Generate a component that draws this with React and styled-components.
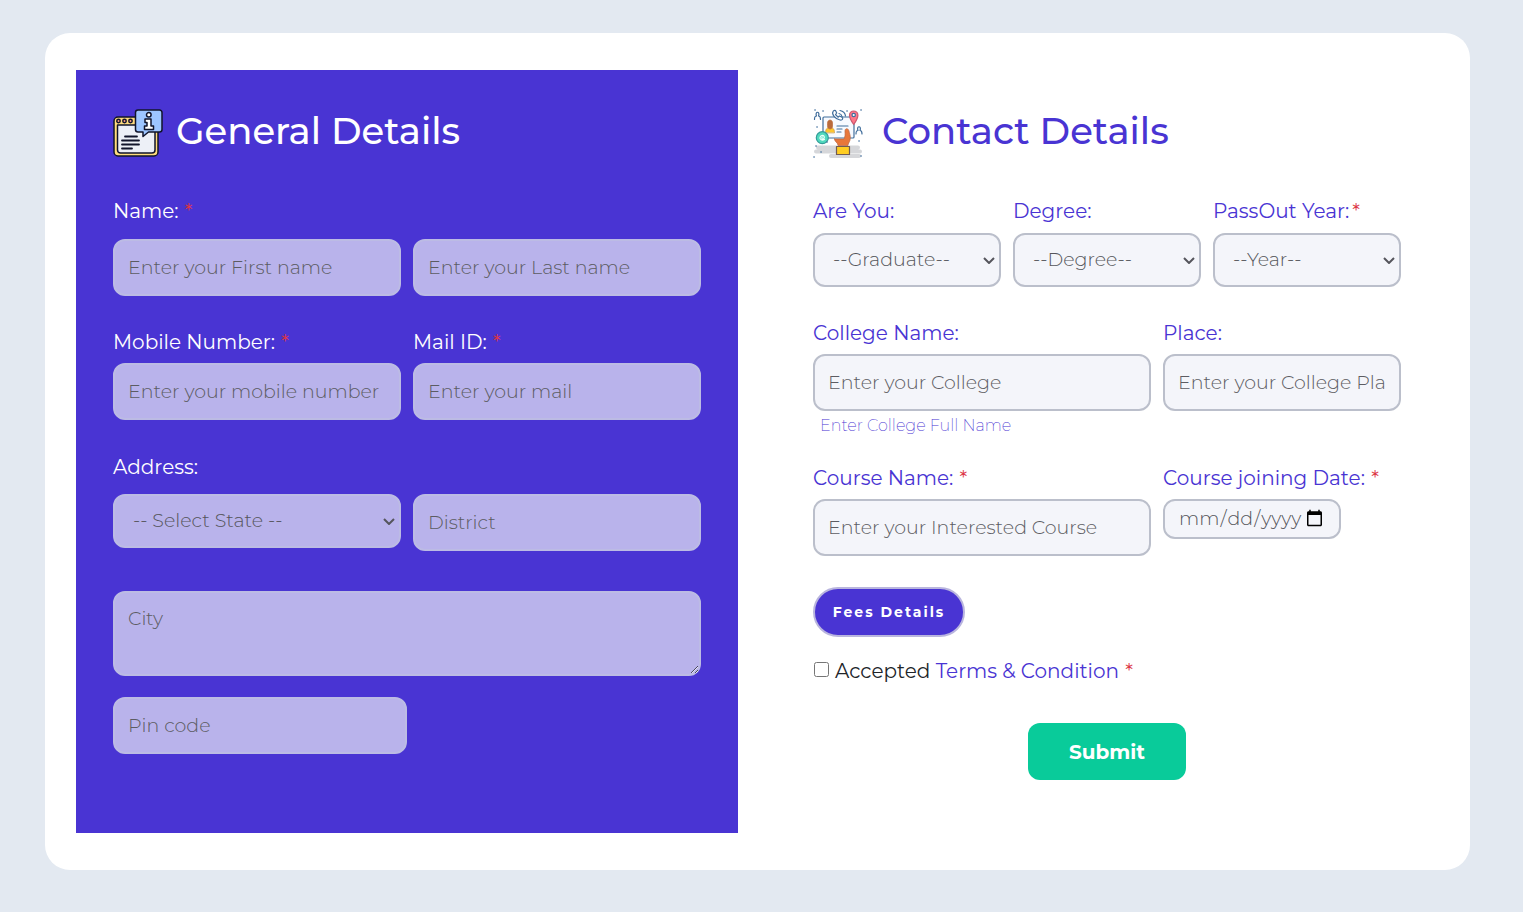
import React from "react";
import styled, { createGlobalStyle, css } from "styled-components";

const violet = "#4934d3";
const font = `Montserrat, Inter, "Liberation Sans", sans-serif`;

const GlobalStyle = createGlobalStyle`
  *, *::before, *::after { box-sizing: border-box; }
  body { margin: 0; background: #e3e9f1; font-family: ${font}; color: #212529; }
`;

const Page = styled.main`
  display: flow-root;
`;

const Card = styled.form`
  display: flex;
  gap: 38px;
  margin: 33px 53px 42px 45px;
  padding: 37px 32px 37px 31px;
  background: #fff;
  border-radius: 25px;
`;

const Panel = styled.section`
  flex: 1 1 0;
  min-width: 0;
  padding: 37px 37px 53px;
  color: ${(p) => (p.$filled ? "#fff" : violet)};
  background: ${(p) => (p.$filled ? violet : "#fff")};
`;

const Heading = styled.header`
  display: flex;
  align-items: flex-start;
  gap: ${(p) => p.$gap}px;
  height: 52px;
  margin-bottom: 40px;
`;

const Title = styled.h1`
  margin: 0;
  font-size: 37px;
  line-height: 48px;
  font-weight: 500;
  white-space: nowrap;
`;

const Icon = styled.svg`
  width: 50px;
  height: 50px;
  flex: none;
  align-self: flex-end;
`;

const Row = styled.div`
  display: grid;
  grid-template-columns: ${(p) => p.$cols};
  column-gap: ${(p) => p.$colGap ?? 12}px;
  align-items: start;
  margin-bottom: ${(p) => p.$after ?? 34}px;
`;

const Field = styled.div`
  display: flex;
  flex-direction: column;
  align-items: stretch;
  gap: ${(p) => p.$gap || 9}px;
  min-width: 0;
`;

const Label = styled.label`
  font-size: 20px;
  line-height: 24px;
  white-space: nowrap;
`;

const Legend = styled(Label).attrs({ as: "div" })`
  margin-bottom: ${(p) => p.$gap}px;
`;

const Star = styled.span`
  margin-left: ${(p) => (p.$tight ? 3 : 1)}px;
  color: #dc3545;
`;

const control = css`
  width: 100%;
  margin: 0;
  border: 2px solid ${(p) => (p.$tinted ? "#bcbbe4" : "#bbbfcb")};
  border-radius: 12px;
  background: ${(p) => (p.$tinted ? "#b9b3eb" : "#f4f5fa")};
  color: #55555b;
  font-family: ${font};
  font-size: 19px;
  font-weight: 300;
  &::placeholder { color: #5c5c62; opacity: 1; }
`;

const Input = styled.input`
  ${control}
  height: 57px;
  padding: 0 13px;
`;

const DateInput = styled(Input)`
  width: 178px;
  height: 40px;
  padding-bottom: 2px;
`;

const SelectBox = styled.div`
  position: relative;
  svg {
    position: absolute;
    right: 6px;
    top: 50%;
    width: 12px;
    height: 7px;
    margin-top: -3px;
    pointer-events: none;
  }
`;

const SelectControl = styled.select`
  ${control}
  display: block;
  appearance: none;
  height: 54px;
  padding: 0 24px 2px 18px;
`;

const TextArea = styled.textarea`
  ${control}
  display: block;
  height: 85px;
  padding: 14px 13px;
  line-height: 24px;
  resize: vertical;
`;

const Hint = styled.small`
  margin: -3px 0 0 7px;
  font-size: 16px;
  line-height: 18px;
  font-weight: 200;
`;

const FeesButton = styled.button`
  display: block;
  width: 152px;
  height: 50px;
  padding: 0;
  border: 2px solid #b9b5de;
  border-radius: 25px;
  background: ${violet};
  color: #fff;
  font-family: ${font};
  font-size: 14px;
  font-weight: 700;
  letter-spacing: 2px;
`;

const Terms = styled.div`
  display: flex;
  align-items: center;
  gap: 6px;
  margin: 22px 0 40px;
  color: #212529;
  a { color: ${violet}; text-decoration: none; }
`;

const Check = styled.input`
  width: 15px;
  height: 15px;
  margin: 0 0 3px 1px;
`;

const Submit = styled.button`
  display: block;
  width: 158px;
  height: 57px;
  margin: 0 auto;
  border: 0;
  border-radius: 12px;
  background: #09cb9a;
  color: #fff;
  font-family: ${font};
  font-size: 20px;
  font-weight: 700;
`;

function Select({ children, ...rest }) {
  return (
    <SelectBox>
      <SelectControl {...rest}>
        <option>{children}</option>
      </SelectControl>
      <svg viewBox="0 0 12 7" aria-hidden="true" fill="none" stroke="#55555c" strokeWidth="2">
        <path d="M1 1L6 6L11 1" />
      </svg>
    </SelectBox>
  );
}

function InfoIcon() {
  return (
    <Icon viewBox="0 0 50 50" aria-hidden="true" fill="none" stroke="#11142b" strokeWidth="1.5" strokeLinecap="round" strokeLinejoin="round">
      <rect x="1" y="8" width="44" height="39" rx="4" fill="#ffdc7c" />
      <path d="M4.5 16H42V41a3 3 0 0 1-3 3H7.500a3 3 0 0 1-3-3Z" fill="#edf0f7" />
      <g fill="#ff9b83">
        <circle cx="5.500" cy="12" r="1.700" />
        <circle cx="11.500" cy="12" r="1.700" />
        <circle cx="17.500" cy="12" r="1.700" />
      </g>
      <path d="M12 27.500H24M9 31.500H26M9 35.500H26M9 39.500H19" strokeWidth="1.800" />
      <path d="M25 1H46.500a2.500 2.500 0 0 1 2.500 2.500V20.500a2.500 2.500 0 0 1-2.500 2.500H35.500L30 27.500V23H25a2.500 2.500 0 0 1-2.500-2.500V3.500A2.500 2.500 0 0 1 25 1Z" fill="#9dc5ff" />
      <circle cx="35.800" cy="5.800" r="2.300" fill="#fff" />
      <path d="M32 10H38V17H40.500V20.500H31.500V17H34V13.500H32Z" fill="#fff" />
    </Icon>
  );
}

function ContactIcon() {
  return (
    <Icon viewBox="0 0 50 50" aria-hidden="true" fill="none" stroke="#416e9c" strokeWidth="1.200" strokeLinecap="round" strokeLinejoin="round">
      <path d="M5 38.500H45M3 42.500H47M18 47H46" stroke="#d6d7da" strokeWidth="4" />
      <rect x="10" y="8" width="31" height="21" rx="1" fill="#f7faff" />
      <path d="M20 2.500C18.500 5 22 10 27 11c2.500.5 3.500-1.500 2-2.700l-2.500-1.300-1.500 1.200-2.500-2.700 1.200-1.500L22.500 1.500C21.500 1 20.500 1.500 20 2.500Z" fill="#fff" />
      <path d="M26 4.500q2.500.5 3 3M27 1.500q5 1 5.500 5.500" />
      <path d="M12.500 23.500c0-3.500 1.500-5 4.500-5s4.500 1.500 4.500 5Z" fill="#ffc72e" stroke="#ca923e" strokeWidth=".7" />
      <path d="M14.500 14c0-4 5-4 5 0v3c0 4-5 4-5 0Z" fill="#b96b3c" stroke="#bd6b3c" strokeWidth=".7" />
      <path d="M24 17H35M24 20H29M24 23H28" />
      <path d="M40.700 15.500C37.500 11 36.500 8.500 36.500 6.200a4.200 4.200 0 0 1 8.400 0c0 2.300-1 4.800-4.200 9.300Z" fill="#ff7788" stroke="#cb5a70" />
      <circle cx="40.700" cy="6" r="1.700" fill="#fff" stroke="#416e9c" />
      <circle cx="9.300" cy="28.700" r="6" fill="#50d9bd" stroke="#349d99" />
      <path d="M11.500 30.500c-4 2-6-2-3.300-3.800 2.500-1.200 4 1.300 2.600 2.800-1.500 1.300-2.800-.3-1.500-1.600" stroke="#eafffa" />
      <path d="M21.500 30H31c1-2 1.300-4.500 1-7-.5-4 3-4.500 4-1 .3 2.500 2 5 1 9-.3 2-2 3.500-2 5.500H25c0-3-3.500-3.500-3.500-6.500Z" fill="#e8773a" stroke="#b96542" strokeWidth=".7" />
      <rect x="23.500" y="37.500" width="13" height="8" fill="#ffcd22" stroke="#715b54" />
      <path d="M1.500 10.500c0-3 .5-3.500 2-3.500-2-5 4-5 2 0 1.500 0 2 1 2 3.500M43 25c0-3 .5-3.500 2-3.500-2-5 4-5 2 0 1.500 0 2 1 2 3.500" />
      <path d="M2 1h.1M10 2h.1M34 2h.1M48 1h.1M4 18h.1M46 32h.1M3 37h.1M8 43h.1M1 48h.1M14 33h.1M48 47h.1" strokeWidth="1.600" />
    </Icon>
  );
}

export default function App() {
  return (
    <Page>
      <GlobalStyle />
      <Card onSubmit={(e) => e.preventDefault()}>
        <Panel $filled>
          <Heading $gap={13}>
            <InfoIcon />
            <Title>General Details</Title>
          </Heading>
          <Legend id="name" $gap={16}>Name: <Star>*</Star></Legend>
          <Row $cols="1fr 1fr" role="group" aria-labelledby="name">
            <Input $tinted aria-label="First name" placeholder="Enter your First name" />
            <Input $tinted aria-label="Last name" placeholder="Enter your Last name" />
          </Row>
          <Row $cols="1fr 1fr" $after={35}>
            <Field>
              <Label htmlFor="mobile">Mobile Number: <Star>*</Star></Label>
              <Input $tinted id="mobile" type="tel" placeholder="Enter your mobile number" />
            </Field>
            <Field>
              <Label htmlFor="mail">Mail ID: <Star>*</Star></Label>
              <Input $tinted id="mail" type="email" placeholder="Enter your mail" />
            </Field>
          </Row>
          <Legend id="address" $gap={15}>Address:</Legend>
          <Row $cols="1fr 1fr" $after={40} role="group" aria-labelledby="address">
            <Select $tinted aria-label="State">-- Select State --</Select>
            <Input $tinted aria-label="District" placeholder="District" />
          </Row>
          <Row $cols="1fr" $after={21}>
            <TextArea $tinted aria-label="City" placeholder="City" />
          </Row>
          <Row $cols="1fr 1fr" $colGap={0} $after={0}>
            <Input $tinted aria-label="Pin code" placeholder="Pin code" />
          </Row>
        </Panel>

        <Panel>
          <Heading $gap={19}>
            <ContactIcon />
            <Title>Contact Details</Title>
          </Heading>
          <Row $cols="1fr 1fr 1fr">
            <Field $gap={10}>
              <Label htmlFor="status">Are You:</Label>
              <Select id="status">--Graduate--</Select>
            </Field>
            <Field $gap={10}>
              <Label htmlFor="degree">Degree:</Label>
              <Select id="degree">--Degree--</Select>
            </Field>
            <Field $gap={10}>
              <Label htmlFor="year">PassOut Year:<Star $tight>*</Star></Label>
              <Select id="year">--Year--</Select>
            </Field>
          </Row>
          <Row $cols="338fr 238fr" $after={31}>
            <Field>
              <Label htmlFor="college">College Name:</Label>
              <Input id="college" placeholder="Enter your College" />
              <Hint>Enter College Full Name</Hint>
            </Field>
            <Field>
              <Label htmlFor="place">Place:</Label>
              <Input id="place" placeholder="Enter your College Place" />
            </Field>
          </Row>
          <Row $cols="338fr 238fr" $after={31}>
            <Field>
              <Label htmlFor="course">Course Name: <Star>*</Star></Label>
              <Input id="course" placeholder="Enter your Interested Course" />
            </Field>
            <Field>
              <Label htmlFor="joining">Course joining Date: <Star>*</Star></Label>
              <DateInput id="joining" type="date" />
            </Field>
          </Row>
          <FeesButton type="button">Fees Details</FeesButton>
          <Terms>
            <Check id="terms" type="checkbox" />
            <Label htmlFor="terms">Accepted <a href="#terms">Terms &amp; Condition</a> <Star>*</Star></Label>
          </Terms>
          <Submit type="submit">Submit</Submit>
        </Panel>
      </Card>
    </Page>
  );
}
